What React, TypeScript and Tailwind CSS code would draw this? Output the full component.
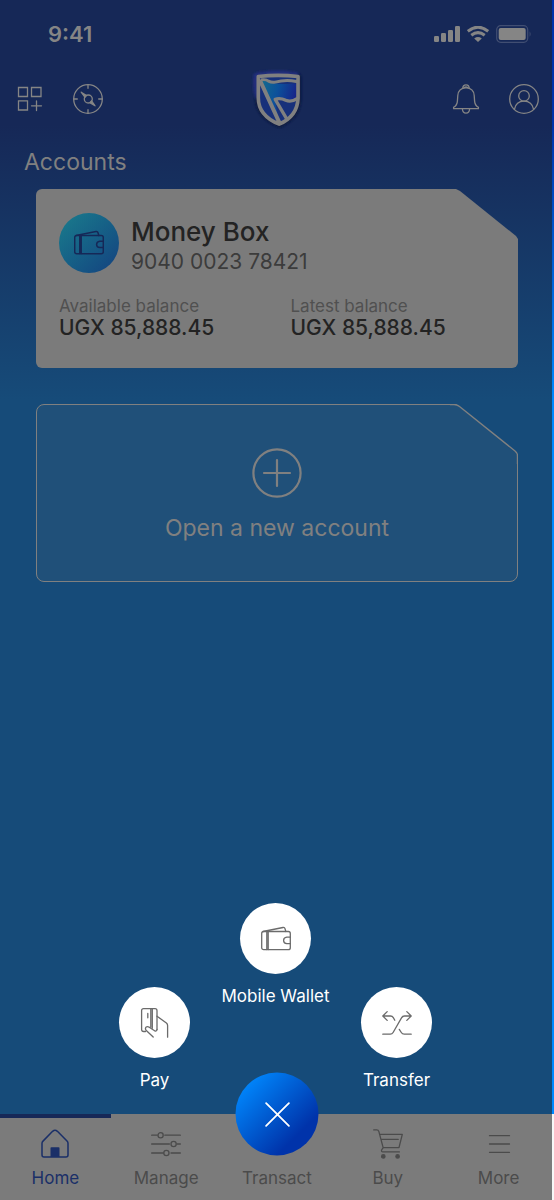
import type { ReactNode, SVGProps } from "react";

type IconProps = SVGProps<SVGSVGElement>;

function Icon({ children, ...props }: IconProps) {
  return (
    <svg
      viewBox="0 0 30 30"
      fill="none"
      stroke="currentColor"
      strokeWidth="1.3"
      strokeLinecap="round"
      strokeLinejoin="round"
      aria-hidden="true"
      {...props}
    >
      {children}
    </svg>
  );
}

function WalletIcon(props: IconProps) {
  return (
    <Icon {...props}>
      <rect x="0.7" y="7.5" width="28.6" height="18.2" rx="2" />
      <path d="M5.800 7.500v18M7.200 7.500v18M2 7.500 22 3.500q1.600-.3 2 1.200l.8 2.800M29.300 13.200h-3.500q-3.200.4-3.200 3.200t3.200 3.200h3.500" />
    </Icon>
  );
}

function PayIcon(props: IconProps) {
  return (
    <Icon {...props}>
      <path d="M5.500 23.500H3.600q-2 0-2-2v-19q0-1.800 2-1.800H15q2 0 2 2V21.500M10.800.7v18.600M12.300.7v19.600M7.800 5.500v4.300" />
      <path d="m17 8.200 9.400 6.800q1.200 1 1.200 2.600v11.600M13.200 29l-7.200-6.800q-1.200-2 .2-3.200 1.100-.8 3 .2l5.800 3.800q1.800.4 2-1.500" />
    </Icon>
  );
}

function TransferIcon(props: IconProps) {
  return (
    <Icon {...props}>
      <path d="M.8 26.200h7.500q1.800 0 2.800-1.700l8.400-14.600q1-1.900 3-1.900H29M24.800 3.600 29.200 8l-4.400 4.400M5.200 3.600.8 8l4.400 4.400M1 8h7.500q1.800 0 2.800 1.700l1.500 2.600M17.300 21.400l2 3.100q1 1.700 3 1.700h6.900" />
    </Icon>
  );
}

function Shield() {
  return (
    <svg viewBox="33 30 160 180" className="h-[60px] w-[53px]" role="img" aria-label="Bank logo">
      <defs>
        <linearGradient id="flag" x1="0" y1="0.2" x2="1" y2="0.5">
          <stop offset="0" stopColor="#136a8d" />
          <stop offset="0.45" stopColor="#0c519b" />
          <stop offset="1" stopColor="#191f87" />
        </linearGradient>
        <filter id="soft" x="-20%" y="-20%" width="140%" height="140%">
          <feGaussianBlur stdDeviation="3" />
        </filter>
      </defs>
      <path d="M45 44Q112 30 180 44l5 8v72q-4 58-66 84Q48 178 45 124Z" fill="#0e1a40" filter="url(#soft)" />
      <path d="M40 46q5-9 30-9 42-7 86 0 20 1 23 8L150 62 60 90l-12 34Q36 98 40 46Z" fill="#222e7b" filter="url(#soft)" />
      <path d="M54 52q60-13 121 0v68q-2 50-59 74Q54 168 54 118Z" fill="#18307a" />
      <path d="M60 66 82 66q24 13 88 7v46q-18 11-34 2-15-5-31 0l12 66Z" fill="url(#flag)" />
      <g fill="none" stroke="#808080" strokeWidth="11" strokeLinecap="round" strokeLinejoin="round">
        <path d="M55 52q60-7 120 0v66q-2 54-57 78Q55 170 55 116Z" />
        <path d="M62 68 118 190" strokeWidth="12" />
        <path d="M66 62q12-2 20 4 9 5 20 3 32-9 64-2" strokeWidth="9" />
        <path d="M172 119q-18 12-34 5-17-8-32-3l33 56" strokeWidth="10" />
      </g>
    </svg>
  );
}

function RoundAction({ label, className = "", children }: { label: string; className?: string; children: ReactNode }) {
  return (
    <button type="button" className={`flex flex-col items-center gap-[11px] text-white ${className}`}>
      <span className="flex size-[71px] items-center justify-center rounded-full bg-white text-[#6b6b6b]">
        {children}
      </span>
      <span className="text-[17px] leading-[22px] whitespace-nowrap">{label}</span>
    </button>
  );
}

const balances = [
  { label: "Available balance", value: "UGX 85,888.45" },
  { label: "Latest balance", value: "UGX 85,888.45" },
];

const tabs = [
  {
    label: "Home",
    icon: (
      <Icon className="size-[30px]" strokeWidth="1.5">
        <path d="M2 14.300q0-1.200 1-2.200L12.600 2.300q2.400-2 4.800 0L27 12.100q1 1 1 2.200V26q0 2-2 2H4q-2 0-2-2Z" />
        <path d="M10.500 28v-9q0-.8.8-.8h7.400q.8 0 .8.8V28Z" fill="currentColor" stroke="none" />
      </Icon>
    ),
  },
  {
    label: "Manage",
    icon: (
      <Icon className="size-[30px]">
        <path d="M.6 6.200h5.600M13.800 6.200h15.600M.6 15h17.800M26 15h3.400M.6 24h11.800M20 24h9.400" />
        <circle cx="9.600" cy="6.200" r="2.600" />
        <circle cx="22.600" cy="15" r="2.600" />
        <circle cx="15.400" cy="24" r="2.600" />
      </Icon>
    ),
  },
  { label: "Transact", icon: <span className="size-[30px]" /> },
  {
    label: "Buy",
    icon: (
      <Icon className="size-[30px]">
        <path d="M.7.9h3q1.700 0 2.200 1.700l4.300 16.200M6.600 5.400h22.700l-3.300 13.200H10.200L8.600 21q-.5 1.900 1.200 1.900h16.600M8 10.400h17.200" />
        <circle cx="10.300" cy="27.400" r="1.700" fill="currentColor" />
        <circle cx="24.600" cy="27.400" r="1.700" fill="currentColor" />
      </Icon>
    ),
  },
  {
    label: "More",
    icon: (
      <Icon className="size-[30px]">
        <path d="M5.500 6.700h20M5.500 15h20M5.500 23.300h20" />
      </Icon>
    ),
  },
];

function StatusBar() {
  return (
    <div className="flex h-[68px] items-center justify-between pr-[22px] pl-12 text-[#858585]">
      <span className="text-[22px] leading-7 font-semibold">9:41</span>
      <div className="flex items-center gap-[7px]">
        <svg viewBox="0 0 26 16" className="h-4 w-[26px]" fill="currentColor" aria-hidden="true">
          <rect y="10" width="5" height="6" rx="1.200" />
          <rect x="7" y="7" width="5" height="9" rx="1.200" />
          <rect x="14" y="4" width="5" height="12" rx="1.200" />
          <rect x="21" y="0" width="5" height="16" rx="1.200" />
        </svg>
        <svg viewBox="0 0 22 16" className="h-4 w-[22px]" aria-hidden="true">
          <path d="M.8 5.200q10.200-8 20.400 0M4.300 9.200q6.700-5.200 13.400 0" fill="none" stroke="currentColor" strokeWidth="3" />
          <path d="M7.200 12.400q3.800-2.800 7.600 0L11 16Z" fill="currentColor" />
        </svg>
        <svg viewBox="0 0 36 18" className="h-[18px] w-9" aria-hidden="true">
          <rect x="0.7" y="0.7" width="31" height="16.600" rx="4" fill="none" stroke="#414e72" strokeWidth="1.200" />
          <rect x="2.700" y="2.900" width="27" height="12" rx="2" fill="currentColor" />
          <path d="M33.600 6.200q2 2.800 0 5.600Z" fill="#414e72" />
        </svg>
      </div>
    </div>
  );
}

function Header() {
  return (
    <header className="flex h-[62px] items-center justify-between px-[15px] text-[#858585]">
      <div className="flex gap-7">
        <button type="button" aria-label="Add widget">
          <Icon className="size-[30px]" strokeLinejoin="miter">
            <path d="M3.500 3.500h9v9h-9ZM16.500 3.500h9.500v9h-9.500ZM3.500 16.800h9v9.200h-9ZM21.500 17v9.500M16.500 21.800h10" />
          </Icon>
        </button>
        <button type="button" aria-label="Explore">
          <Icon className="size-[30px]">
            <circle cx="15" cy="15" r="14.300" />
            <path d="M15 .7v3.600M15 25.700v3.600M.7 15h3.600M25.700 15h3.600" />
            <circle cx="15.300" cy="15" r="4" />
            <path d="m8.200 8.200 3.700 5L13.500 11.600ZM22 21.800l-3.400-5-1.800 1.800Z" fill="currentColor" />
          </Icon>
        </button>
      </div>
      <Shield />
      <div className="flex gap-7">
        <button type="button" aria-label="Notifications">
          <Icon className="size-[30px]">
            <path d="M2.600 24.700v-1.400q3.600-2 3.800-6.200l.4-5.600q.6-7.200 8.200-7.800 7.600.6 8.200 7.800l.4 5.600q.2 4.200 3.800 6.200v1.400Z" />
            <path d="M11.800 4.400q0-3.600 3.200-3.600t3.200 3.600M13.400 3.600q1.600-1.400 3.200 0M11.400 24.800q.2 4.400 3.600 4.400t3.600-4.400" />
          </Icon>
        </button>
        <button type="button" aria-label="Profile">
          <Icon className="size-[30px]">
            <circle cx="15" cy="15" r="14.300" />
            <circle cx="15" cy="11.900" r="5.300" />
            <path d="M5.400 25.400q1.600-8.200 9.600-8.200t9.600 8.200" />
          </Icon>
        </button>
      </div>
    </header>
  );
}

export default function App() {
  return (
    <div className="relative flex min-h-screen flex-col bg-[linear-gradient(#162857_0,#162857_125px,#164b79_400px)] font-['Inter','Liberation_Sans',sans-serif]">
      <StatusBar />
      <Header />

      <main className="flex grow flex-col">
        <h1 className="px-6 pt-4 text-[23px] leading-8 text-[#808080]">Accounts</h1>

        <div className="mt-[11px] flex flex-col gap-9 px-9">
          <section className="rounded-md bg-[#7b7b7b] pt-6 pb-[29px] pl-[23px] [clip-path:polygon(0_0,calc(100%-62px)_0,calc(100%-58px)_2px,calc(100%-2px)_47px,100%_50px,100%_100%,0_100%)]">
            <div className="flex gap-3">
              <span className="flex size-[60px] items-center justify-center rounded-full bg-linear-to-br from-[#1b7d8c] to-[#15417f] text-[#162857]">
                <WalletIcon className="size-[30px]" strokeWidth="1.500" />
              </span>
              <div className="pt-1">
                <h2 className="text-[26px] leading-[30px] font-medium text-[#232323]">Money Box</h2>
                <p className="text-[21px] leading-[30px] text-[#3c3c3c]">9040 0023 78421</p>
              </div>
            </div>
            <dl className="mt-[18px] grid grid-cols-2 gap-x-1">
              {balances.map((item) => (
                <div key={item.label}>
                  <dt className="text-[17px] leading-[22px] text-[#505050]">{item.label}</dt>
                  <dd className="text-[21px] leading-[22px] font-medium text-[#232323]">{item.value}</dd>
                </div>
              ))}
            </dl>
          </section>

          <div className="relative">
            <button
              type="button"
              className="flex w-full flex-col items-center rounded-lg border border-[#808080] bg-[#205079] pt-[43px] pb-[37px] text-[#808080] [clip-path:polygon(0_0,calc(100%-62px)_0,100%_51px,100%_100%,0_100%)]"
            >
              <Icon viewBox="0 0 50 50" className="size-[50px]" strokeWidth="2.200">
                <circle cx="25" cy="25" r="23.600" />
                <path d="M25 12v26M12 25h26" />
              </Icon>
              <span className="mt-[14px] text-[23px] leading-8">Open a new account</span>
            </button>
            <svg
              viewBox="0 0 68 60"
              className="pointer-events-none absolute top-0 right-0 h-[60px] w-[68px]"
              aria-hidden="true"
            >
              <path d="M0 .5h4q3 0 5.500 2L65 47q2.500 2 2.500 5v8" fill="none" stroke="#808080" strokeWidth="1.400" />
            </svg>
          </div>
        </div>

        <div className="mt-auto flex items-end justify-center pr-[3px] pb-[23px]">
          <div className="grid w-[363px] grid-cols-3 justify-items-center">
            <RoundAction label="Pay" className="pt-[84px]">
              <PayIcon className="size-[30px]" />
            </RoundAction>
            <RoundAction label="Mobile Wallet" className="pb-[84px]">
              <WalletIcon className="size-[30px]" />
            </RoundAction>
            <RoundAction label="Transfer" className="pt-[84px]">
              <TransferIcon className="size-[30px]" />
            </RoundAction>
          </div>
        </div>
      </main>

      <nav className="relative grid grid-cols-5 bg-[#7b7b7b]">
        {tabs.map((tab, index) => (
          <a
            key={tab.label}
            href="#"
            aria-current={index === 0 ? "page" : undefined}
            className={`flex flex-col items-center gap-2 border-t-4 pt-[11px] pb-[11px] text-[17px] leading-[22px] ${
              index === 0 ? "border-[#162857] text-[#1a2f68]" : "border-transparent text-[#4b4b4b]"
            }`}
          >
            {tab.icon}
            {tab.label}
          </a>
        ))}
        <button
          type="button"
          aria-label="Close"
          className="absolute top-0 left-1/2 flex size-[83px] -translate-x-1/2 -translate-y-1/2 items-center justify-center rounded-full bg-linear-135 from-[#0089ff] from-10% to-[#0033aa] to-75% text-white"
        >
          <Icon className="size-[30px]" strokeWidth="1.800">
            <path d="m3.600 3.600 22.800 22.800M26.400 3.600 3.600 26.400" />
          </Icon>
        </button>
      </nav>

      {/* sliver of the page that the scrim leaves uncovered */}
      <div className="pointer-events-none absolute inset-y-0 right-0 w-[2px] bg-[linear-gradient(#0033aa_0,#0033aa_125px,#0089ff_400px,#0089ff_calc(100%-86px),#f7f7f7_calc(100%-86px))]" />
    </div>
  );
}
